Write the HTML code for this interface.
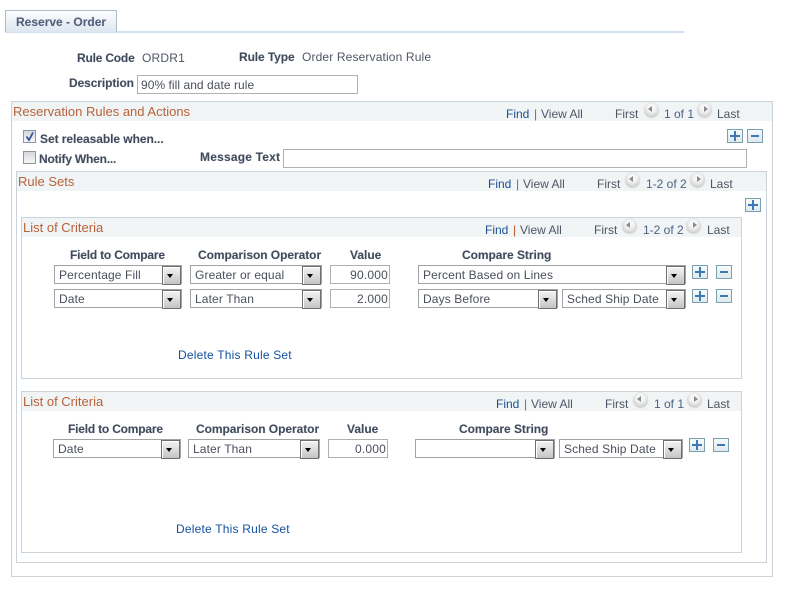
<!DOCTYPE html>
<html><head><meta charset="utf-8"><style>
html,body{margin:0;padding:0;width:786px;height:594px;overflow:hidden;background:#fff}
body{position:relative;font:12px/14px "Liberation Sans",Arial,sans-serif;color:#4a4f5c}
div,span,a{position:absolute;box-sizing:border-box;white-space:nowrap}
.b{font-weight:bold;color:#414a5a;text-shadow:0 0 1px #c4ccd8}
.box{border:1px solid #cbd2d9;background:#fff}
.hd{left:0;right:0;top:0;height:19px;background:#f0f4f5}
.t{color:#b8623a;font-size:13px}
.l{color:#1d4f94}
.g{color:#4f5664}
.pg{color:#4a6287}
.sep{color:#b5562a}
.in{background:#fff;border:1px solid #b0b0b0;height:19px;padding:2px 3px 0 3px;color:#4a4f5c}
.num{text-align:right;padding-right:1px;letter-spacing:.2px}
.sel{background:#fff;border:1px solid #a2a2a2;height:19px;padding:2px 4px 0 4px;color:#4a4f5c;letter-spacing:.12px}
.sel i{position:absolute;right:0;top:0;width:17px;height:17px;border:1px solid #6e6e6e;box-shadow:inset 1px 1px 0 #fff;background:linear-gradient(#f4f4f4,#c4c4c4)}
.sel i:after{content:"";position:absolute;left:4px;top:7px;border:3.5px solid transparent;border-top:4px solid #000;border-bottom:0}
.btn{width:16px;height:14px;border:1px solid #7aa0b0;background:linear-gradient(#f6fafb,#dfe9ee)}
.btn:before{content:"";position:absolute;left:3px;right:3px;top:5px;height:2px;background:#3d7ab5}
.plus:after{content:"";position:absolute;left:6px;top:1px;bottom:1px;width:2px;background:#3d7ab5}
.plus:before{left:2px;right:2px}
.nav{width:15px;height:15px;border-radius:50%;background:radial-gradient(circle at 50% 40%,#f6f6f6 30%,#dcdcdc 62%,#aeaeae 100%);box-shadow:0 1px 1px #d0d0d0}
.nav:after{content:"";position:absolute;top:4px;border:3px solid transparent}
.p:after{left:4px;border-right:4px solid #8a8a8a;border-left:0}
.n:after{left:7px;border-left:4px solid #8a8a8a;border-right:0}
.cb{width:13px;height:13px;border:1px solid #8f959c;background:linear-gradient(#d4d8dc,#f6f6f6)}
</style></head><body>

<div style="left:5px;top:31px;width:679px;height:2px;background:#d3dfee"></div>
<div style="left:5px;top:10px;width:112px;height:22px;border:1px solid #afbccd;border-bottom:0;background:linear-gradient(#fdfdfe,#dde6f1)"></div>
<span class="b" style="left:16px;top:15px;color:#50607a">Reserve - Order</span>

<span class="b" style="left:77px;top:51px;letter-spacing:-.2px">Rule Code</span>
<span class="g" style="left:142px;top:51px;letter-spacing:.2px">ORDR1</span>
<span class="b" style="left:239px;top:50px;letter-spacing:-.1px">Rule Type</span>
<span class="g" style="left:302px;top:50px;letter-spacing:.14px">Order Reservation Rule</span>
<span class="b" style="left:69px;top:76px;letter-spacing:-.1px">Description</span>
<div class="in" style="left:137px;top:75px;width:221px;letter-spacing:.05px">90% fill and date rule</div>

<!-- Outer box -->
<div class="box" style="left:11px;top:101px;width:762px;height:476px"><div class="hd"></div></div>
<span class="t" style="left:13px;top:105px">Reservation Rules and Actions</span>
<span class="l" style="left:506px;top:107px">Find</span><span class="sep" style="left:534px;top:107px">|</span><span class="g" style="left:541px;top:107px">View All</span>
<span class="g" style="left:615px;top:107px">First</span><div class="nav p" style="left:644px;top:102px"></div><span class="pg" style="left:664px;top:107px">1 of 1</span><div class="nav n" style="left:697px;top:102px"></div><span class="g" style="left:717px;top:107px">Last</span>
<div class="btn plus" style="left:727px;top:129px"></div>
<div class="btn" style="left:747px;top:129px"></div>

<div class="cb" style="left:23px;top:130px"></div>
<svg style="position:absolute;left:23px;top:130px" width="13" height="13"><path d="M3.5 6.5L6 10L10 2.5" fill="none" stroke="#3a4fa0" stroke-width="1.8"/></svg>
<span class="b" style="left:40px;top:132px;letter-spacing:-.05px">Set releasable when...</span>
<div class="cb" style="left:23px;top:151px"></div>
<span class="b" style="left:39px;top:152px;letter-spacing:-.2px">Notify When...</span>
<span class="b" style="left:200px;top:150px;letter-spacing:.2px">Message Text</span>
<div class="in" style="left:283px;top:149px;width:464px"></div>

<!-- Rule Sets -->
<div class="box" style="left:16px;top:171px;width:751px;height:392px"><div class="hd"></div></div>
<span class="t" style="left:18px;top:175px">Rule Sets</span>
<span class="l" style="left:488px;top:177px">Find</span><span class="sep" style="left:516px;top:177px">|</span><span class="g" style="left:523px;top:177px">View All</span>
<span class="g" style="left:597px;top:177px">First</span><div class="nav p" style="left:625px;top:172px"></div><span class="pg" style="left:646px;top:177px">1-2 of 2</span><div class="nav n" style="left:690px;top:172px"></div><span class="g" style="left:710px;top:177px">Last</span>
<div class="btn plus" style="left:745px;top:198px"></div>

<!-- List 1 -->
<div class="box" style="left:21px;top:217px;width:721px;height:162px"><div class="hd"></div></div>
<span class="t" style="left:23px;top:221px">List of Criteria</span>
<span class="l" style="left:485px;top:223px">Find</span><span class="sep" style="left:513px;top:223px">|</span><span class="g" style="left:520px;top:223px">View All</span>
<span class="g" style="left:594px;top:223px">First</span><div class="nav p" style="left:622px;top:218px"></div><span class="pg" style="left:643px;top:223px">1-2 of 2</span><div class="nav n" style="left:686px;top:218px"></div><span class="g" style="left:707px;top:223px">Last</span>

<span class="b" style="left:70px;top:248px;letter-spacing:-.2px">Field to Compare</span>
<span class="b" style="left:198px;top:248px;letter-spacing:-.05px">Comparison Operator</span>
<span class="b" style="left:350px;top:248px">Value</span>
<span class="b" style="left:462px;top:248px;letter-spacing:-.05px">Compare String</span>

<div class="sel" style="left:54px;top:265px;width:128px">Percentage Fill<i></i></div>
<div class="sel" style="left:190px;top:265px;width:132px">Greater or equal<i></i></div>
<div class="in num" style="left:330px;top:265px;width:60px">90.000</div>
<div class="sel" style="left:418px;top:265px;width:268px">Percent Based on Lines<i></i></div>
<div class="btn plus" style="left:692px;top:265px"></div>
<div class="btn" style="left:716px;top:265px"></div>

<div class="sel" style="left:54px;top:289px;width:128px">Date<i></i></div>
<div class="sel" style="left:190px;top:289px;width:132px">Later Than<i></i></div>
<div class="in num" style="left:330px;top:289px;width:60px">2.000</div>
<div class="sel" style="left:418px;top:289px;width:140px">Days Before<i></i></div>
<div class="sel" style="left:562px;top:289px;width:124px">Sched Ship Date<i></i></div>
<div class="btn plus" style="left:692px;top:289px"></div>
<div class="btn" style="left:716px;top:289px"></div>

<span class="l" style="left:178px;top:348px;color:#12509f;letter-spacing:.2px">Delete This Rule Set</span>

<!-- List 2 -->
<div class="box" style="left:21px;top:391px;width:721px;height:162px"><div class="hd"></div></div>
<span class="t" style="left:23px;top:395px">List of Criteria</span>
<span class="l" style="left:496px;top:397px">Find</span><span class="sep" style="left:524px;top:397px">|</span><span class="g" style="left:531px;top:397px">View All</span>
<span class="g" style="left:605px;top:397px">First</span><div class="nav p" style="left:633px;top:392px"></div><span class="pg" style="left:654px;top:397px">1 of 1</span><div class="nav n" style="left:687px;top:392px"></div><span class="g" style="left:707px;top:397px">Last</span>

<span class="b" style="left:68px;top:422px;letter-spacing:-.2px">Field to Compare</span>
<span class="b" style="left:196px;top:422px;letter-spacing:-.05px">Comparison Operator</span>
<span class="b" style="left:347px;top:422px">Value</span>
<span class="b" style="left:459px;top:422px;letter-spacing:-.05px">Compare String</span>

<div class="sel" style="left:53px;top:439px;width:128px">Date<i></i></div>
<div class="sel" style="left:188px;top:439px;width:132px">Later Than<i></i></div>
<div class="in num" style="left:328px;top:439px;width:60px">0.000</div>
<div class="sel" style="left:415px;top:439px;width:140px"><i></i></div>
<div class="sel" style="left:559px;top:439px;width:124px">Sched Ship Date<i></i></div>
<div class="btn plus" style="left:689px;top:438px"></div>
<div class="btn" style="left:713px;top:438px"></div>

<span class="l" style="left:176px;top:522px;color:#12509f;letter-spacing:.2px">Delete This Rule Set</span>

</body></html>
